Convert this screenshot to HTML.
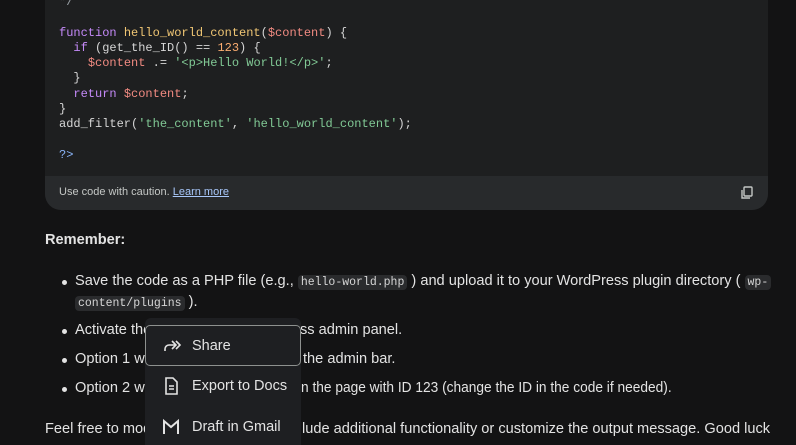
<!DOCTYPE html><html><head><style>
html,body{margin:0;width:796px;height:445px;overflow:hidden}
body{background:#131314;font-family:"Liberation Sans",sans-serif;color:#e3e3e3;position:relative}
.code{position:absolute;left:45px;top:-20px;width:723px;height:230px;background:#1e1f20;border-radius:0 0 16px 16px;overflow:hidden}
pre{margin:0;position:absolute;left:14px;top:15px;font-family:"Liberation Mono",monospace;font-size:12px;line-height:15.3px;color:#d6d6d6}
.k{color:#c58af9}.f{color:#f0c674}.v{color:#f28b82}.n{color:#fcad70}.s{color:#81c995}.b{color:#8ab4f8}
.foot{position:absolute;left:0;bottom:0;width:100%;height:34px;background:#282a2c;font-size:11px;color:#c4c7c5}
.foot span{position:absolute;left:14px;top:10px}
.foot a{color:#a8c7fa;text-decoration:underline}
.t{position:absolute;font-size:14.6px;white-space:nowrap}
.c{font-family:"Liberation Mono",monospace;font-size:11.5px;background:#2a2b2d;border-radius:4px;padding:1px 3px;color:#d6d6d6}
.dot{position:absolute;width:5px;height:5px;border-radius:50%;background:#e3e3e3}
.menu{position:absolute;left:145px;top:318px;width:156px;height:140px;background:#1e1f22;border-radius:6px}
.item{position:absolute;left:0;width:156px;height:40px;font-size:14.5px;color:#e3e3e3}
.item span{position:absolute;left:47px;top:12px}
.item svg{position:absolute;left:16px;top:10px}
</style></head><body>
<div class="code">
<pre><span style="color:#9aa0a6">*/</span>

<span class="k">function</span> <span class="f">hello_world_content</span>(<span class="v">$content</span>) {
  <span class="k">if</span> (get_the_ID() == <span class="n">123</span>) {
    <span class="v">$content</span> .= <span class="s">'&lt;p&gt;Hello World!&lt;/p&gt;'</span>;
  }
  <span class="k">return</span> <span class="v">$content</span>;
}
add_filter(<span class="s">'the_content'</span>, <span class="s">'hello_world_content'</span>);

<span class="b">?&gt;</span></pre>
<div class="foot"><span>Use code with caution. <a>Learn more</a></span>
<svg style="position:absolute;right:14px;top:10px" width="14" height="14" viewBox="0 0 14 14" fill="none" stroke="#c4c7c5" stroke-width="1.4"><rect x="4" y="1" width="8" height="9" rx="1"/><path d="M2 4v8h8"/></svg></div>
</div>
<div class="t" style="left:45px;top:232px;font-weight:bold">Remember:</div>
<div class="dot" style="left:62px;top:280px"></div>
<div class="t" style="left:75px;top:273px">Save the code as a PHP file (e.g., <span class="c">hello-world.php</span> ) and upload it to your WordPress plugin directory ( <span class="c">wp-</span></div>
<div class="t" style="left:75px;top:294px"><span class="c">content/plugins</span> ).</div>
<div class="dot" style="left:62px;top:329px"></div>
<div class="t" style="left:75px;top:322px">Activate the plugin</div>
<div class="t" style="left:300px;top:322px">ss admin panel.</div>
<div class="dot" style="left:62px;top:358px"></div>
<div class="t" style="left:75px;top:351px">Option 1 will display</div>
<div class="t" style="left:303px;top:351px">the admin bar.</div>
<div class="dot" style="left:62px;top:387px"></div>
<div class="t" style="left:75px;top:380px">Option 2 will display</div>
<div class="t" style="left:301px;top:380px;transform:scaleX(0.94);transform-origin:left">n the page with ID 123 (change the ID in the code if needed).</div>
<div class="t" style="left:45px;top:421px">Feel free to modify the</div>
<div class="t" style="left:302px;top:421px">lude additional functionality or customize the output message. Good luck</div>
<div class="menu">
<div class="item" style="top:7px;border:1px solid #8e918f;border-radius:5px;width:156px;box-sizing:border-box;height:41px"><svg width="20" height="20" viewBox="0 0 20 20" fill="none" stroke="#e3e3e3" stroke-width="1.6"><path d="M3 15v-2a4 4 0 0 1 4-4h6"/><path d="M10 5l4 4-4 4"/><path d="M14 5l4 4-4 4"/></svg><span style="left:46px">Share</span></div>
<div class="item" style="top:48px"><svg width="20" height="20" viewBox="0 0 20 20" fill="none" stroke="#e3e3e3" stroke-width="1.6"><path d="M5 2h7l4 4v12H5z"/><path d="M8 10h5M8 13h5"/></svg><span>Export to Docs</span></div>
<div class="item" style="top:89px"><svg width="20" height="20" viewBox="0 0 20 20" fill="none" stroke="#e3e3e3" stroke-width="2"><path d="M3 17V4l7 6 7-6v13"/></svg><span>Draft in Gmail</span></div>
</div>
</body></html>
